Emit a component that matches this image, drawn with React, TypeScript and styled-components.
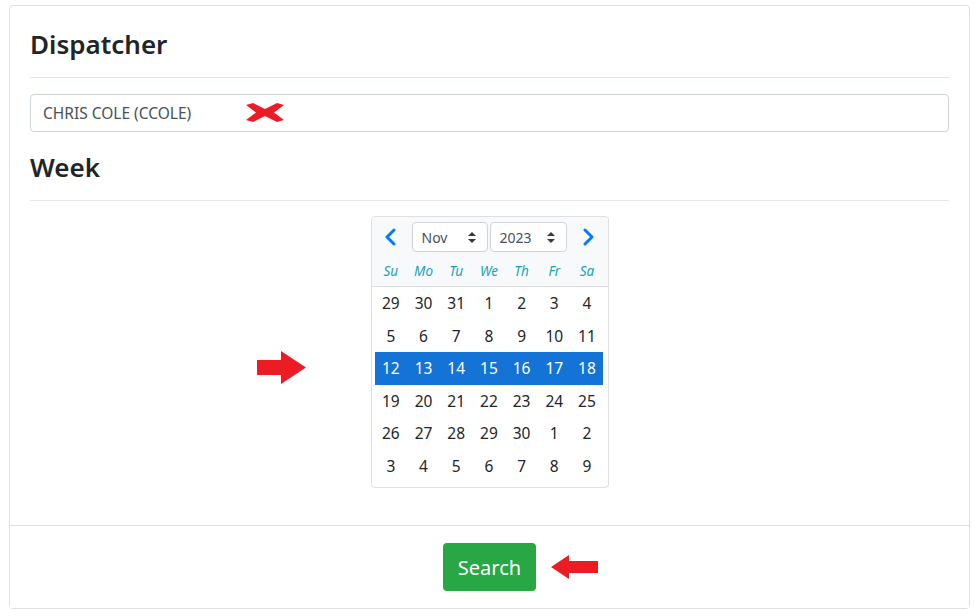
import styled, { createGlobalStyle } from "styled-components";

const GlobalStyle = createGlobalStyle`
	body {
		margin: 0;
		background: #ffffff;
		font-family: "Segoe UI", "Noto Sans", "Liberation Sans", sans-serif;
		color: #212529;
	}
`;

const Page = styled.div`
	padding: 5px 5px 8px 9px;
`;

const Card = styled.div`
	border: 1px solid #dfdfdf;
	border-radius: 4px;
	background: #fff;
	display: flex;
	flex-direction: column;
`;

const CardBody = styled.div`
	padding: 21px 20px 37px;
	display: flex;
	flex-direction: column;
`;

const Heading = styled.h3`
	margin: 0;
	font-size: 26px;
	font-weight: 600;
	line-height: 34px;
	color: #212529;
`;

const Rule = styled.hr`
	margin: 16px 0 16px;
	border: 0;
	border-top: 1px solid #e6e6e6;
`;

const Field = styled.div`
	position: relative;
	height: 38px;
	box-sizing: border-box;
	border: 1px solid #ced4da;
	border-radius: 4px;
	padding: 0 12px;
	display: flex;
	align-items: center;
	font-size: 15.5px;
	color: #495057;
	margin-bottom: 18px;
`;

const Cross = styled.svg`
	position: absolute;
	left: 215px;
	top: 8px;
`;

const PickerWrap = styled.div`
	position: relative;
	align-self: center;
	margin-top: -1px;
`;

const Picker = styled.div`
	width: 236px;
	border: 1px solid #dfdfdf;
	border-radius: 4px;
	overflow: hidden;
`;

const PickerHead = styled.div`
	background: #f8f9fa;
	border-bottom: 1px solid #dfdfdf;
	padding: 5px 0 0;
`;

const NavRow = styled.div`
	display: grid;
	grid-template-columns: 38px 76px 77px 38px;
	column-gap: 2px;
	height: 30px;
`;

const NavButton = styled.button`
	border: 0;
	background: none;
	padding: 0;
	display: flex;
	align-items: center;
	justify-content: center;
`;

const Select = styled.div`
	box-sizing: border-box;
	height: 30px;
	border: 1px solid #ced4da;
	border-radius: 4px;
	background: #fff;
	display: flex;
	align-items: center;
	justify-content: space-between;
	padding: 0 11px 0 9px;
	font-size: 14px;
	color: #495057;
`;

const DayGrid = styled.div<{ $head?: boolean }>`
	display: grid;
	grid-template-columns: repeat(7, 32.7px);
	padding: ${(p) => (p.$head ? "3px 3px 0" : "0 3px 5px")};
`;

const WeekdayCell = styled.div`
	height: 31px;
	display: flex;
	align-items: center;
	justify-content: center;
	font-size: 13.5px;
	font-style: italic;
	color: #17a2b8;
`;

const Week = styled.div<{ $selected?: boolean }>`
	display: contents;
	& > div {
		background: ${(p) => (p.$selected ? "#1473d6" : "transparent")};
		color: ${(p) => (p.$selected ? "#ffffff" : "#212529")};
	}
`;

const DayCell = styled.div`
	height: 32.5px;
	display: flex;
	align-items: center;
	justify-content: center;
	font-size: 15.5px;
`;

const Arrow = styled.svg`
	position: absolute;
	top: 50%;
	left: calc(100% + 15px);
	transform: translateY(-50%);
`;

const ArrowRow = styled.svg`
	position: absolute;
	left: -114px;
	top: 135px;
`;

const CardFooter = styled.div`
	border-top: 1px solid #dfdfdf;
	background: #ffffff;
	padding: 17px 20px 17px;
	display: flex;
	justify-content: center;
`;

const ButtonWrap = styled.div`
	position: relative;
`;

const SearchButton = styled.button`
	height: 48px;
	width: 93px;
	border: 0;
	border-radius: 4px;
	background: #28a745;
	color: #fff;
	font-family: inherit;
	font-size: 20px;
`;

const days = [
	[29, 30, 31, 1, 2, 3, 4],
	[5, 6, 7, 8, 9, 10, 11],
	[12, 13, 14, 15, 16, 17, 18],
	[19, 20, 21, 22, 23, 24, 25],
	[26, 27, 28, 29, 30, 1, 2],
	[3, 4, 5, 6, 7, 8, 9],
];

const weekdays = ["Su", "Mo", "Tu", "We", "Th", "Fr", "Sa"];

function Chevron({ dir }: { dir: "left" | "right" }) {
	return (
		<svg width="14" height="18" viewBox="0 0 14 18">
			<path
				d={dir === "left" ? "M10 2 L3 9 L10 16" : "M4 2 L11 9 L4 16"}
				fill="none"
				stroke="#007bff"
				strokeWidth="3"
				strokeLinecap="round"
				strokeLinejoin="round"
			/>
		</svg>
	);
}

function Updown() {
	return (
		<svg width="8" height="11" viewBox="0 0 8 11">
			<path d="M4 0 L8 4 L0 4 Z M4 11 L0 7 L8 7 Z" fill="#343a40" />
		</svg>
	);
}

export default function App() {
	return (
		<>
			<GlobalStyle />
			<Page>
				<Card>
					<CardBody>
						<Heading>Dispatcher</Heading>
						<Rule />
						<Field>
							CHRIS COLE (CCOLE)
							<Cross width="38" height="19" viewBox="0 0 38 19">
								<path
									d="M0 2 L7 0 L19 6 L31 0 L38 2 L28 9.5 L38 17 L31 19 L19 13 L7 19 L0 17 L10 9.5 Z"
									fill="#ed1c24"
								/>
							</Cross>
						</Field>
						<Heading>Week</Heading>
						<Rule />
						<PickerWrap>
							<ArrowRow width="49" height="33" viewBox="0 0 49 33">
								<path d="M0 9 L24 9 L24 0 L49 16.5 L24 33 L24 24 L0 24 Z" fill="#ed1c24" />
							</ArrowRow>
							<Picker>
								<PickerHead>
									<NavRow>
										<NavButton>
											<Chevron dir="left" />
										</NavButton>
										<Select>
											Nov <Updown />
										</Select>
										<Select>
											2023 <Updown />
										</Select>
										<NavButton>
											<Chevron dir="right" />
										</NavButton>
									</NavRow>
									<DayGrid $head>
										{weekdays.map((d) => (
											<WeekdayCell key={d}>{d}</WeekdayCell>
										))}
									</DayGrid>
								</PickerHead>
								<DayGrid>
									{days.map((week, i) => (
										<Week key={i} $selected={i === 2}>
											{week.map((d, j) => (
												<DayCell key={j}>{d}</DayCell>
											))}
										</Week>
									))}
								</DayGrid>
							</Picker>
						</PickerWrap>
					</CardBody>
					<CardFooter>
						<ButtonWrap>
							<SearchButton>Search</SearchButton>
							<Arrow width="47" height="24" viewBox="0 0 47 24">
								<path d="M0 12 L18 0 L18 6 L47 6 L47 18 L18 18 L18 24 Z" fill="#ed1c24" />
							</Arrow>
						</ButtonWrap>
					</CardFooter>
				</Card>
			</Page>
		</>
	);
}
